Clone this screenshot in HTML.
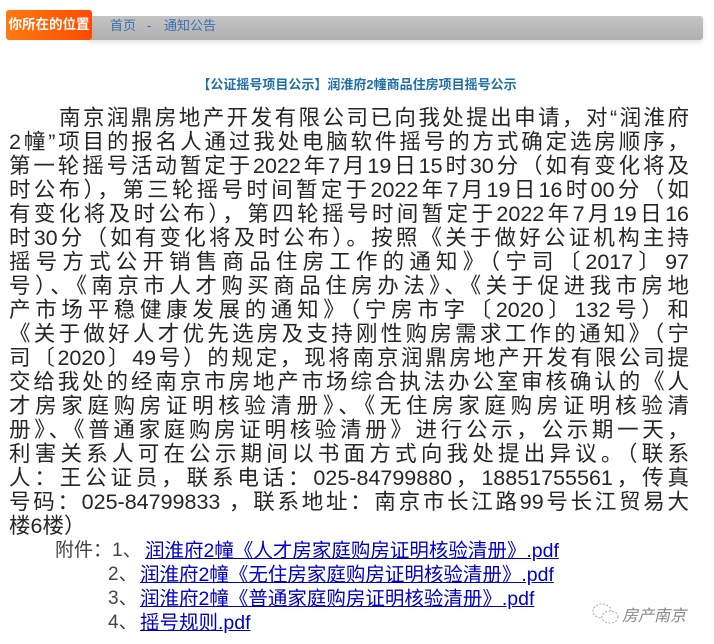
<!DOCTYPE html>
<html><head><meta charset="utf-8"><style>
body{margin:0;width:714px;height:644px;background:#fff;position:relative;overflow:hidden;font-family:"Liberation Sans","Noto Sans CJK SC",sans-serif;}
.bar{position:absolute;left:88px;top:16px;width:615px;height:24px;background:linear-gradient(to bottom,#c4c4c4,#b0b0b0);border-radius:0 3px 3px 0;box-shadow:0 3px 4px #e6e6e6;}
.badge{position:absolute;left:6px;top:10px;width:86px;height:30px;background:linear-gradient(to right,#ff7a10,#ff4a00);border-radius:3px;color:#fff;font-weight:bold;font-size:13.5px;line-height:30px;text-align:center;white-space:nowrap;}
.crumb{position:absolute;top:17px;font-size:13px;color:#3a6fb0;line-height:18px;}
.title{position:absolute;left:0;width:714px;top:74px;text-align:center;font-size:13px;font-weight:bold;color:#1f6ea8;}
.body{position:absolute;left:9px;top:106px;width:680px;font-size:21.5px;line-height:24px;color:#262626;}
.l{text-align:justify;text-align-last:justify;white-space:nowrap;height:24px;}
.att{position:absolute;font-size:19px;color:#444;line-height:24px;white-space:nowrap;}
a{position:absolute;font-size:19.5px;line-height:24px;white-space:nowrap;color:#0000cc;text-decoration:underline;}
.wm{position:absolute;left:622px;top:602px;font-size:16px;color:#888;font-style:italic;}
</style></head><body>
<div class="bar"></div>
<div class="badge">你所在的位置</div>
<div class="crumb" style="left:110px">首页</div>
<div class="crumb" style="left:147px">-</div>
<div class="crumb" style="left:164px">通知公告</div>
<div class="title">【公证摇号项目公示】润淮府2幢商品住房项目摇号公示</div>
<div class="body">
<div class="l" style="padding-left:50px">南京润鼎房地产开发有限公司已向我处提出申请，对“润淮府</div>
<div class="l">2幢”项目的报名人通过我处电脑软件摇号的方式确定选房顺序，</div>
<div class="l">第一轮摇号活动暂定于2022年7月19日15时30分（如有变化将及</div>
<div class="l">时公布），第三轮摇号时间暂定于2022年7月19日16时00分（如</div>
<div class="l">有变化将及时公布），第四轮摇号时间暂定于2022年7月19日16</div>
<div class="l">时30分（如有变化将及时公布）。按照《关于做好公证机构主持</div>
<div class="l">摇号方式公开销售商品住房工作的通知》（宁司〔2017〕97</div>
<div class="l">号）、《南京市人才购买商品住房办法》、《关于促进我市房地</div>
<div class="l">产市场平稳健康发展的通知》（宁房市字〔2020〕132号）和</div>
<div class="l">《关于做好人才优先选房及支持刚性购房需求工作的通知》（宁</div>
<div class="l">司〔2020〕49号）的规定，现将南京润鼎房地产开发有限公司提</div>
<div class="l">交给我处的经南京市房地产市场综合执法办公室审核确认的《人</div>
<div class="l">才房家庭购房证明核验清册》、《无住房家庭购房证明核验清</div>
<div class="l">册》、《普通家庭购房证明核验清册》进行公示，公示期一天，</div>
<div class="l">利害关系人可在公示期间以书面方式向我处提出异议。（联系</div>
<div class="l">人：王公证员，联系电话：025-84799880，18851755561，传真</div>
<div class="l">号码：025-84799833 ，联系地址：南京市长江路99号长江贸易大</div>
<div style="height:24px;white-space:nowrap">楼6楼）</div>
</div>
<div class="att" style="left:55px;top:539px">附件：1、</div><a style="left:145px;top:539px">润淮府2幢《人才房家庭购房证明核验清册》.pdf</a>
<div class="att" style="left:108px;top:563px">2、</div><a style="left:140px;top:563px">润淮府2幢《无住房家庭购房证明核验清册》.pdf</a>
<div class="att" style="left:108px;top:587px">3、</div><a style="left:140px;top:587px">润淮府2幢《普通家庭购房证明核验清册》.pdf</a>
<div class="att" style="left:108px;top:611px">4、</div><a style="left:140px;top:611px">摇号规则.pdf</a>
<svg style="position:absolute;left:591px;top:601px" width="30" height="26" viewBox="0 0 30 26"><ellipse cx="11" cy="10" rx="9" ry="7" fill="none" stroke="#aaa" stroke-dasharray="2 1.5"/><ellipse cx="19" cy="16" rx="8" ry="6" fill="#fff" stroke="#aaa" stroke-dasharray="2 1.5"/></svg>
<div class="wm">房产南京</div>
</body></html>
